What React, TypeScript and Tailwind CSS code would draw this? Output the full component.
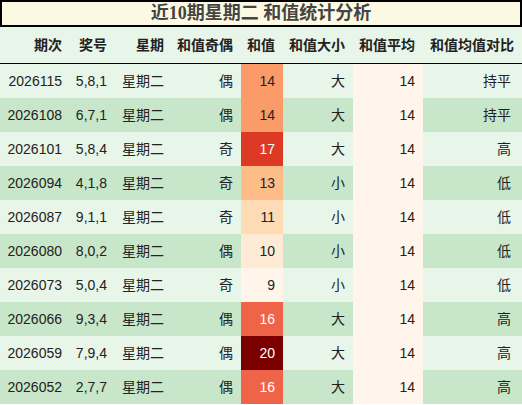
import React from "react";

const rows = [
  ["2026115", "5,8,1", "星期二", "偶", 14, "大", 14, "持平"],
  ["2026108", "6,7,1", "星期二", "偶", 14, "大", 14, "持平"],
  ["2026101", "5,8,4", "星期二", "奇", 17, "大", 14, "高"],
  ["2026094", "4,1,8", "星期二", "奇", 13, "小", 14, "低"],
  ["2026087", "9,1,1", "星期二", "奇", 11, "小", 14, "低"],
  ["2026080", "8,0,2", "星期二", "偶", 10, "小", 14, "低"],
  ["2026073", "5,0,4", "星期二", "奇", 9, "小", 14, "低"],
  ["2026066", "9,3,4", "星期二", "偶", 16, "大", 14, "高"],
  ["2026059", "7,9,4", "星期二", "偶", 20, "大", 14, "高"],
  ["2026052", "2,7,7", "星期二", "偶", 16, "大", 14, "高"],
] as const;

const heat: Record<number, string> = {
  9: "#fff5eb",
  10: "#feead5",
  11: "#fddbb5",
  13: "#fdbc88",
  14: "#fc9b6a",
  16: "#ef6448",
  17: "#dc3a25",
  20: "#7a0000",
};

const headers = ["期次", "奖号", "星期", "和值奇偶", "和值", "和值大小", "和值平均", "和值均值对比"];

const font = { fontFamily: '"Liberation Sans", "Noto Sans CJK SC", sans-serif' };

export default function App() {
  return (
    <div className="w-[522px] h-[405px] bg-white overflow-hidden text-[14px] text-[#222]" style={font}>
      <div
        className="h-[27px] border-2 border-black bg-[#fcf9e2] flex items-center justify-center font-bold text-[18px] text-[#444]"
        style={{ fontFamily: '"Liberation Serif", "Noto Sans CJK SC", serif' }}
      >
        近10期星期二 和值统计分析
      </div>
      <div className="grid grid-cols-[70px_45px_57px_69px_42px_70px_70px_99px] h-[37px] bg-[#e8f5e9] border-b-[1.5px] border-black font-bold">
        {headers.map((h) => (
          <div key={h} className="flex items-center justify-end pr-[8px] pt-[1px]">
            {h}
          </div>
        ))}
      </div>
      {rows.map((r, i) => {
        const bg = i % 2 === 0 ? "bg-[#e8f5e9]" : "bg-[#c8e6c9]";
        const v = r[4] as number;
        const white = v >= 16;
        return (
          <div key={r[0]} className={`grid grid-cols-[70px_45px_57px_69px_42px_70px_70px_99px] h-[34px] ${bg}`}>
            <div className="flex items-center justify-end pr-[8px]">{r[0]}</div>
            <div className="flex items-center justify-end pr-[8px]">{r[1]}</div>
            <div className="flex items-center justify-end pr-[8px]">{r[2]}</div>
            <div className="flex items-center justify-end pr-[8px]">{r[3]}</div>
            <div
              className={`flex items-center justify-end pr-[8px] ${white ? "text-white" : "text-[#222]"}`}
              style={{ backgroundColor: heat[v] }}
            >
              {v}
            </div>
            <div className="flex items-center justify-end pr-[8px]">{r[5]}</div>
            <div className="flex items-center justify-end pr-[8px] bg-[#fff5eb]">{r[6]}</div>
            <div className="flex items-center justify-end pr-[11px]">{r[7]}</div>
          </div>
        );
      })}
    </div>
  );
}
